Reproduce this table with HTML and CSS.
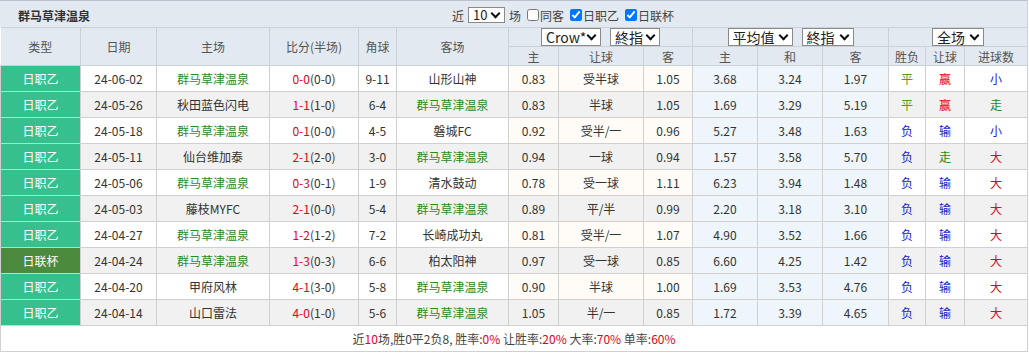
FILE: index.html
```html
<!DOCTYPE html>
<html lang="zh-CN">
<head>
  <meta charset="UTF-8" />
  <title>群马草津温泉 近期战绩</title>
  <link rel="stylesheet" href="styles.css">
</head>
<body>
  <div class="title-bar">
    <span class="team-title">群马草津温泉</span>
    <div class="filters">
      <span>近</span>
      <span class="pick"><select class="sel-count"><option>10</option></select></span>
      <span>场</span>
      <label><input type="checkbox" />同客</label>
      <label><input type="checkbox" checked />日职乙</label>
      <label><input type="checkbox" checked />日联杯</label>
    </div>
  </div>

  <table class="history">
    <colgroup>
      <col style="width:80px"><col style="width:76px"><col style="width:113px"><col style="width:89px"><col style="width:38px"><col style="width:112px">
      <col style="width:50px"><col style="width:85px"><col style="width:49px">
      <col style="width:65px"><col style="width:65px"><col style="width:66px">
      <col style="width:37px"><col style="width:39px"><col style="width:63px">
    </colgroup>
    <thead>
      <tr class="head-a">
        <th rowspan="2">类型</th>
        <th rowspan="2">日期</th>
        <th rowspan="2">主场</th>
        <th rowspan="2">比分(半场)</th>
        <th rowspan="2">角球</th>
        <th rowspan="2">客场</th>
        <th colspan="3">
          <div class="pick-row">
            <span class="pick"><select class="sel-company"><option>Crow*</option></select></span>
            <span class="pick"><select class="sel-final"><option>終指</option></select></span>
          </div>
        </th>
        <th colspan="3">
          <div class="pick-row">
            <span class="pick"><select class="sel-avg"><option>平均值</option></select></span>
            <span class="pick"><select class="sel-final2"><option>終指</option></select></span>
          </div>
        </th>
        <th colspan="3">
          <div class="pick-row">
            <span class="pick"><select class="sel-half"><option>全场</option></select></span>
          </div>
        </th>
      </tr>
      <tr class="head-b">
        <th>主</th><th>让球</th><th>客</th>
        <th>主</th><th>和</th><th>客</th>
        <th>胜负</th><th>让球</th><th>进球数</th>
      </tr>
    </thead>
    <tbody>
      <tr>
        <td class="lg">日职乙</td><td>24-06-02</td><td class="us">群马草津温泉</td><td><span class="red">0-0</span>(0-0)</td><td>9-11</td><td>山形山神</td>
        <td class="odds">0.83</td><td class="odds">受半球</td><td class="odds">1.05</td>
        <td class="avg">3.68</td><td class="avg">3.24</td><td class="avg">1.97</td>
        <td class="draw">平</td><td class="red">赢</td><td class="blue">小</td>
      </tr>
      <tr>
        <td class="lg">日职乙</td><td>24-05-26</td><td>秋田蓝色闪电</td><td><span class="red">1-1</span>(1-0)</td><td>6-4</td><td class="us">群马草津温泉</td>
        <td class="odds">0.83</td><td class="odds">半球</td><td class="odds">1.05</td>
        <td class="avg">1.69</td><td class="avg">3.29</td><td class="avg">5.19</td>
        <td class="draw">平</td><td class="red">赢</td><td class="green">走</td>
      </tr>
      <tr>
        <td class="lg">日职乙</td><td>24-05-18</td><td class="us">群马草津温泉</td><td><span class="red">0-1</span>(0-0)</td><td>4-5</td><td>磐城FC</td>
        <td class="odds">0.92</td><td class="odds">受半/一</td><td class="odds">0.96</td>
        <td class="avg">5.27</td><td class="avg">3.48</td><td class="avg">1.63</td>
        <td class="blue">负</td><td class="blue">输</td><td class="blue">小</td>
      </tr>
      <tr>
        <td class="lg">日职乙</td><td>24-05-11</td><td>仙台维加泰</td><td><span class="red">2-1</span>(2-0)</td><td>3-0</td><td class="us">群马草津温泉</td>
        <td class="odds">0.94</td><td class="odds">一球</td><td class="odds">0.94</td>
        <td class="avg">1.57</td><td class="avg">3.58</td><td class="avg">5.70</td>
        <td class="blue">负</td><td class="green">走</td><td class="red">大</td>
      </tr>
      <tr>
        <td class="lg">日职乙</td><td>24-05-06</td><td class="us">群马草津温泉</td><td><span class="red">0-3</span>(0-1)</td><td>1-9</td><td>清水鼓动</td>
        <td class="odds">0.78</td><td class="odds">受一球</td><td class="odds">1.11</td>
        <td class="avg">6.23</td><td class="avg">3.94</td><td class="avg">1.48</td>
        <td class="blue">负</td><td class="blue">输</td><td class="red">大</td>
      </tr>
      <tr>
        <td class="lg">日职乙</td><td>24-05-03</td><td>藤枝MYFC</td><td><span class="red">2-1</span>(0-0)</td><td>5-4</td><td class="us">群马草津温泉</td>
        <td class="odds">0.89</td><td class="odds">平/半</td><td class="odds">0.99</td>
        <td class="avg">2.20</td><td class="avg">3.18</td><td class="avg">3.10</td>
        <td class="blue">负</td><td class="blue">输</td><td class="red">大</td>
      </tr>
      <tr>
        <td class="lg">日职乙</td><td>24-04-27</td><td class="us">群马草津温泉</td><td><span class="red">1-2</span>(1-2)</td><td>7-2</td><td>长崎成功丸</td>
        <td class="odds">0.81</td><td class="odds">受半/一</td><td class="odds">1.07</td>
        <td class="avg">4.90</td><td class="avg">3.52</td><td class="avg">1.66</td>
        <td class="blue">负</td><td class="blue">输</td><td class="red">大</td>
      </tr>
      <tr>
        <td class="cup">日联杯</td><td>24-04-24</td><td class="us">群马草津温泉</td><td><span class="red">1-3</span>(0-3)</td><td>6-6</td><td>柏太阳神</td>
        <td class="odds">0.97</td><td class="odds">受一球</td><td class="odds">0.85</td>
        <td class="avg">6.60</td><td class="avg">4.25</td><td class="avg">1.42</td>
        <td class="blue">负</td><td class="blue">输</td><td class="red">大</td>
      </tr>
      <tr>
        <td class="lg">日职乙</td><td>24-04-20</td><td>甲府风林</td><td><span class="red">4-1</span>(3-0)</td><td>5-8</td><td class="us">群马草津温泉</td>
        <td class="odds">0.90</td><td class="odds">半球</td><td class="odds">1.00</td>
        <td class="avg">1.69</td><td class="avg">3.53</td><td class="avg">4.76</td>
        <td class="blue">负</td><td class="blue">输</td><td class="red">大</td>
      </tr>
      <tr>
        <td class="lg">日职乙</td><td>24-04-14</td><td>山口雷法</td><td><span class="red">4-0</span>(1-0)</td><td>5-6</td><td class="us">群马草津温泉</td>
        <td class="odds">1.05</td><td class="odds">半/一</td><td class="odds">0.85</td>
        <td class="avg">1.72</td><td class="avg">3.39</td><td class="avg">4.65</td>
        <td class="blue">负</td><td class="blue">输</td><td class="red">大</td>
      </tr>
    </tbody>
    <tfoot>
      <tr>
        <td colspan="15" class="summary">
          近<span class="red">10</span>场,胜0平2负8, 胜率:<span class="red">0%</span> 让胜率:<span class="red">20%</span> 大率:<span class="red">70%</span> 单率:<span class="red">60%</span>
        </td>
      </tr>
    </tfoot>
  </table>
</body>
</html>
```

FILE: styles.css
```css
body {
  margin: 0;
  font-family: "Noto Sans CJK SC", "Microsoft YaHei", sans-serif;
  font-size: 12px;
  color: #333;
  background: #fff;
}

.title-bar {
  display: flex;
  align-items: center;
  width: 1027px;
  height: 26px;
  background-color: #e3e9f0;
  border-top: 1px solid #b9c2cc;
  border-right: 1px solid #c9d1d9;
}

.team-title {
  width: 434px;
  padding-left: 18px;
  padding-top: 2px;
  font-weight: bold;
  color: #333;
}

.filters {
  display: flex;
  align-items: center;
  gap: 4px;
  color: #444;
  padding-top: 2px;
}

.filters label {
  display: flex;
  align-items: center;
}

.filters input[type="checkbox"] {
  width: 12px;
  height: 12px;
  margin: 0 1px 0 2px;
}

/* select boxes with a bold chevron */
.pick {
  position: relative;
  display: inline-block;
  line-height: 0;
}

.pick::after {
  content: "";
  position: absolute;
  right: 6px;
  top: 4px;
  width: 5px;
  height: 5px;
  border-right: 2px solid #111;
  border-bottom: 2px solid #111;
  transform: rotate(45deg);
  pointer-events: none;
}

select {
  appearance: none;
  -webkit-appearance: none;
  height: 18px;
  font-family: "Noto Sans CJK SC", sans-serif;
  font-size: 14px;
  line-height: 16px;
  color: #222;
  background: #fff;
  border: 1px solid #8a8a8a;
  border-radius: 0;
  padding: 0 0 0 4px;
  margin: 0;
}

.sel-count {
  width: 37px;
  height: 16px;
  font-size: 13px;
  line-height: 14px;
}

.sel-count + .x {}

.filters .pick::after {
  top: 3px;
  right: 6px;
}

.sel-company { width: 60px; }
.sel-final { width: 50px; }
.sel-avg { width: 65px; }
.sel-final2 { width: 52px; }
.sel-half { width: 52px; }

.pick-row {
  display: flex;
  justify-content: center;
  align-items: center;
  gap: 9px;
}

.history {
  border-collapse: collapse;
  table-layout: fixed;
  width: 1028px;
}

.history th,
.history td {
  padding: 0;
  text-align: center;
  white-space: nowrap;
  overflow: hidden;
}

.history th {
  background-color: #e3e9f0;
  color: #555;
  font-weight: normal;
  border: 1px solid #c9d1d9;
  border-left: none;
}

.head-a th,
.head-b th {
  height: 18px;
}

.history td {
  height: 25px;
  border: 1px solid #d0d0d0;
  background-color: #fff;
}

.history tbody tr:nth-child(even) td {
  background-color: #f1f1f1;
}

.history tbody tr:nth-child(odd) td.odds {
  background-color: #fffcf8;
}

.history tbody td.avg,
.history tbody tr:nth-child(even) td.avg {
  background-color: #eef6fc;
}

.history td.lg,
.history tbody tr:nth-child(even) td.lg {
  background-color: #36c08d;
  color: #fff;
  border-color: #e8f6ef #d0d0d0 #e8f6ef 0;
}

.history td.cup,
.history tbody tr:nth-child(even) td.cup {
  background-color: #4c8a3d;
  color: #fff;
  border-color: #e8f6ef #d0d0d0 #e8f6ef 0;
}

.us { color: #2b8a1e; }
.red { color: #e60020; }
.blue { color: #1a1acb; }
.green { color: #1f8a1f; }
.draw { color: #5c9a14; }

.history td.summary {
  background-color: #fff;
  color: #444;
  height: 25px;
  border-right: 1px solid #c9d1d9;
}
```
